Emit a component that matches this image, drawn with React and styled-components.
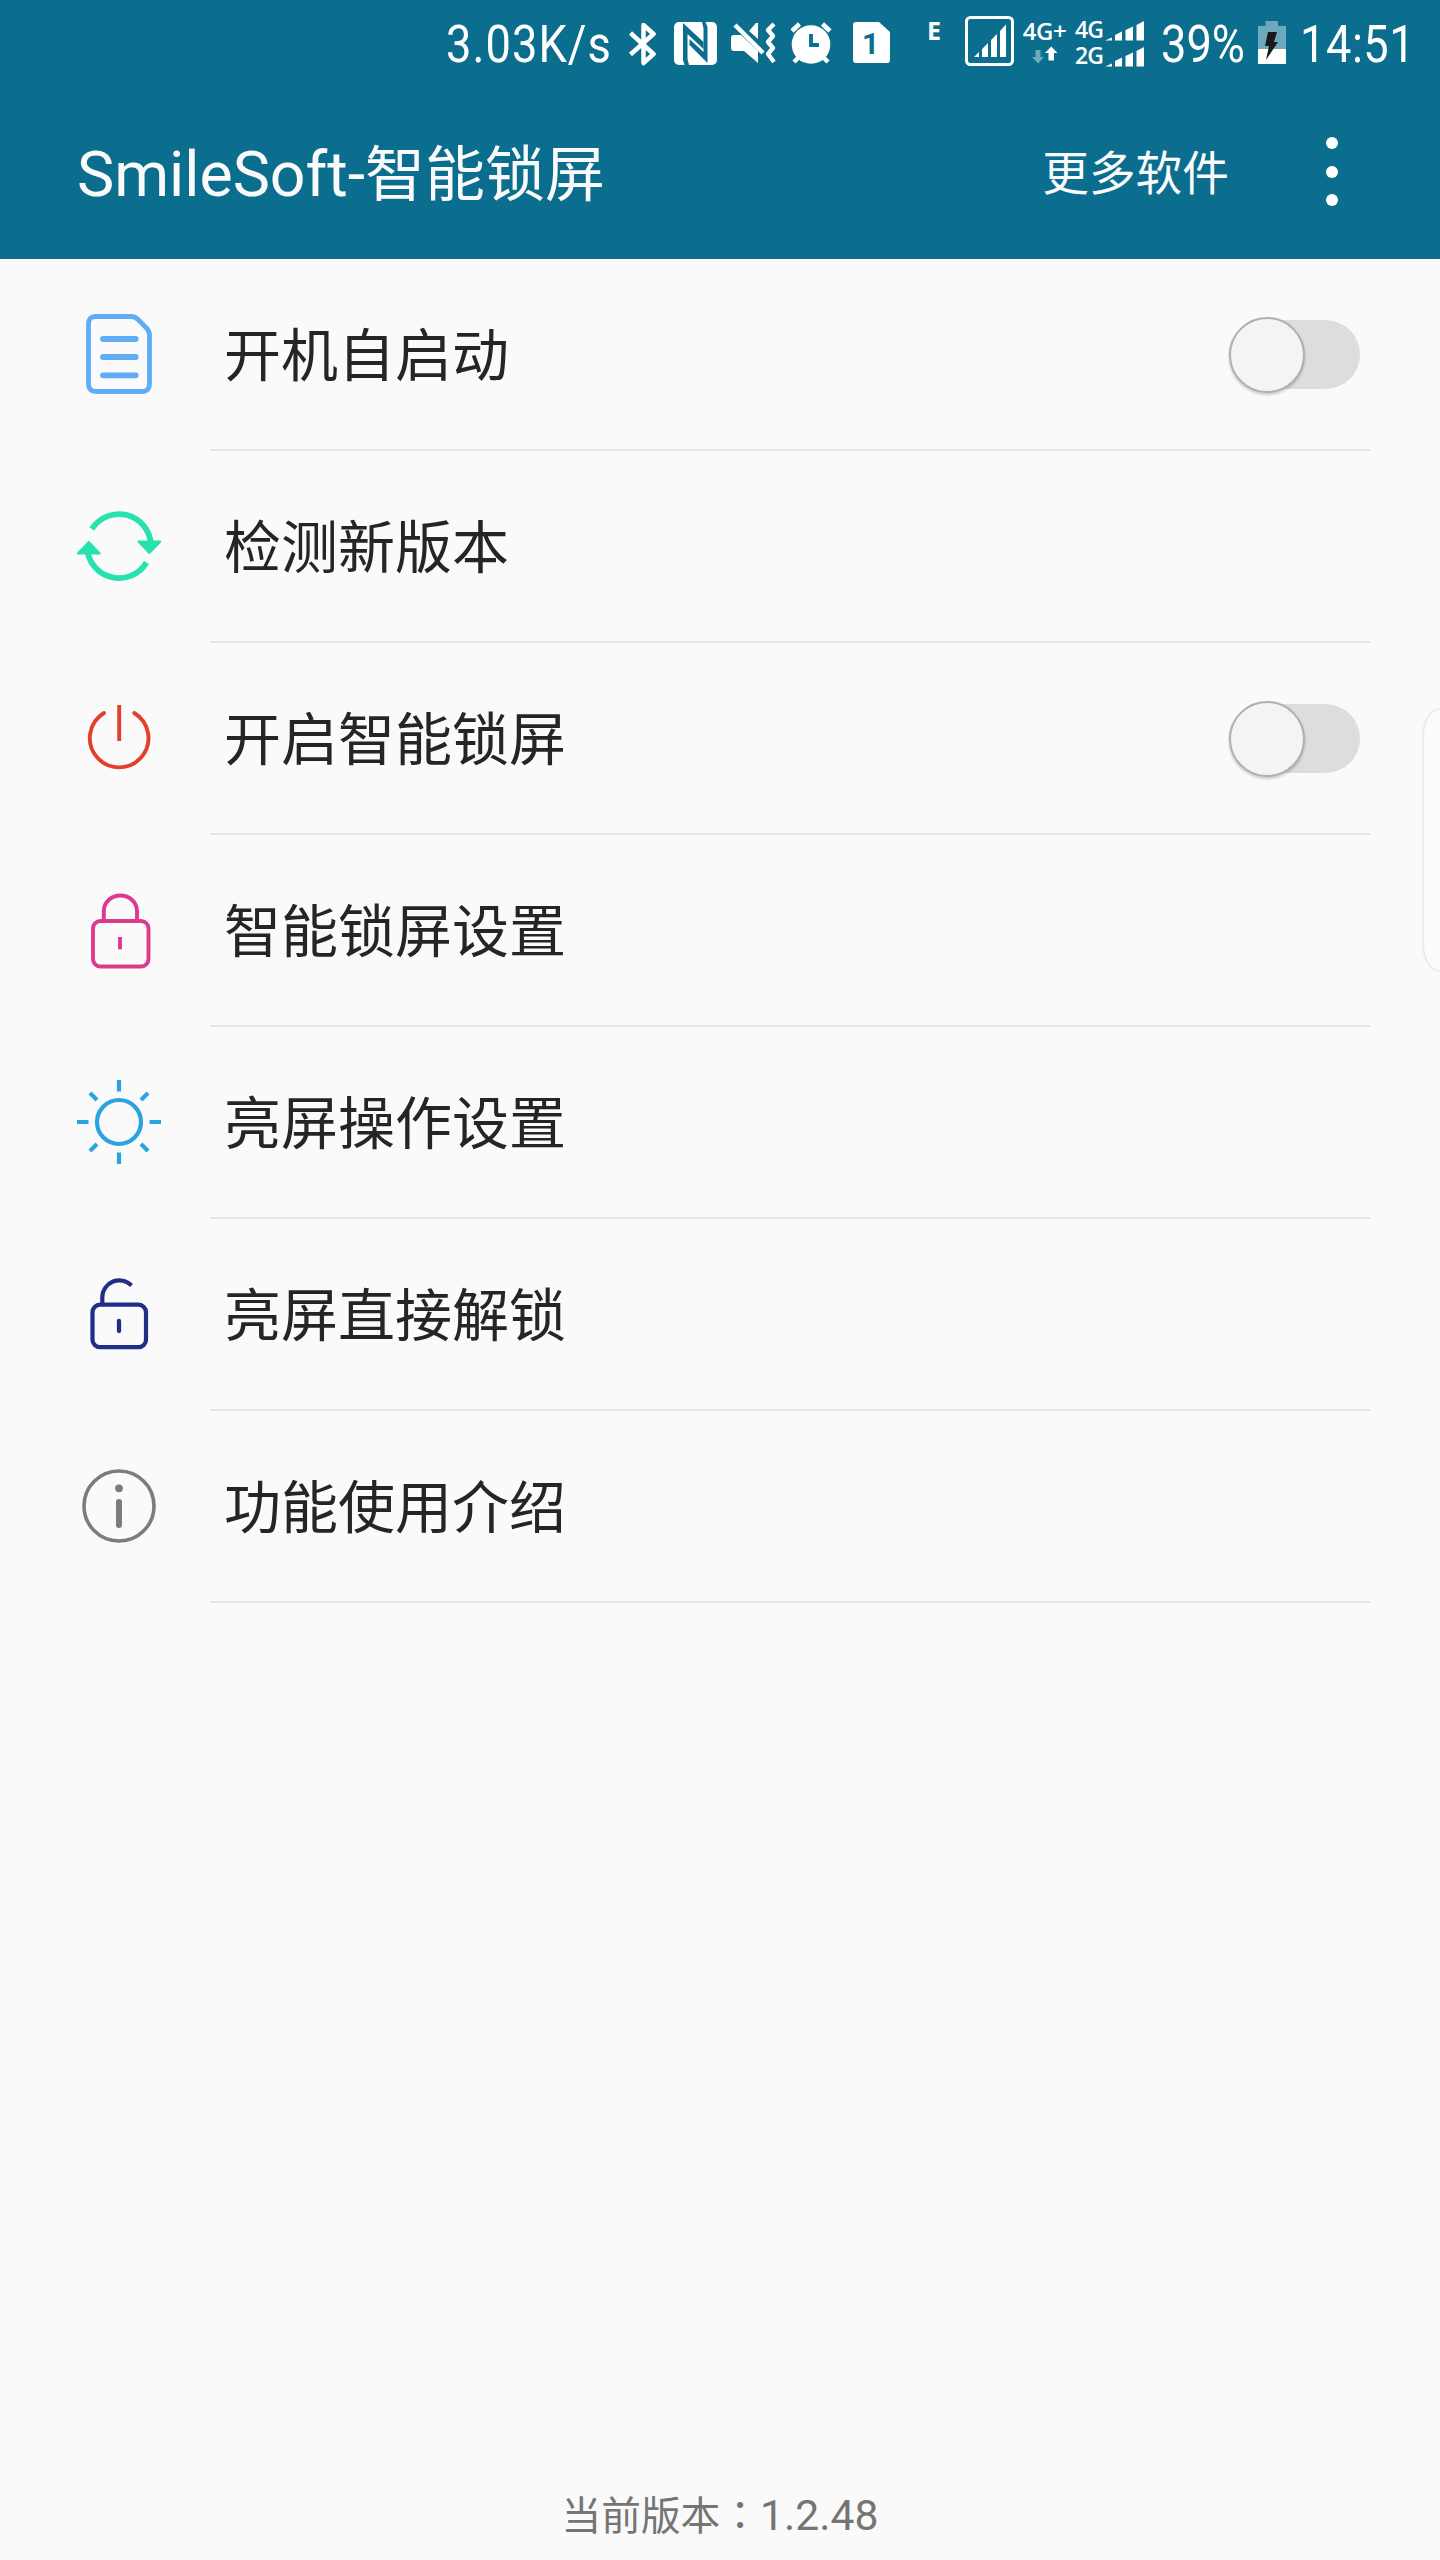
import React from "react";
import styled, { createGlobalStyle } from "styled-components";

const GlobalStyle = createGlobalStyle`
    * {
      box-sizing: border-box;
    }
    body {
      margin: 0;
      background: #fafafa;
      font-family: Roboto, "Noto Sans CJK SC", sans-serif;
    }
    svg {
      display: block;
    }
`;

const BluetoothIcon = () => (
    <svg width="28" height="44" viewBox="0 0 28 44" fill="none" stroke="#fff" strokeWidth="4.5" strokeLinejoin="round">
        <path d="M1.5 11L24.5 32L14.5 41V3L24.5 12L1.5 32.5" />
    </svg>
);

const NfcIcon = () => (
    <svg width="43" height="43" viewBox="0 0 43 43" fill="#0c6e8f">
        <rect width="43" height="43" rx="5" fill="#fff" />
        <path d="M9 1L29.500 20V27L13.500 12V37L15 43H10.500L9 38Z" />
        <path d="M33.500 41L15.500 23V17L29.500 30V6L28 0H31.500L33.500 5Z" />
    </svg>
);

const MuteIcon = () => (
    <svg width="46" height="44" viewBox="0 0 46 44" fill="none" stroke="#fff">
        <path d="M0 16Q0 13 3 13H10L27 29V41L13 29H3Q0 29 0 26Z" fill="#fff" stroke="none" />
        <path d="M18 9L25 1H27V17Z" fill="#fff" stroke="none" />
        <path d="M4 3L32 31" strokeWidth="4.5" />
        <path d="M43 2L37 8L42 14L37 20L42 26L37 32L43 40" strokeWidth="4.3" strokeLinejoin="round" />
    </svg>
);

const AlarmIcon = () => (
    <svg width="42" height="42" viewBox="0 0 42 42" fill="none" stroke="#fff" strokeWidth="4.5">
        <circle cx="21" cy="22.5" r="19.3" fill="#fff" stroke="none" />
        <path d="M2 9L9.5 2M32.500 2L40 9M9 35L4 40M33 35L38 40" />
        <path d="M21 12V23H29" stroke="#0c6e8f" strokeWidth="3.8" />
    </svg>
);

const SimIcon = () => (
    <svg width="37" height="41" viewBox="0 0 37 41" fill="#fff">
        <path d="M3 0H26L37 10V38Q37 41 34 41H3Q0 41 0 38V3Q0 0 3 0Z" />
    </svg>
);

const SignalBoxIcon = () => (
    <svg width="49" height="50" viewBox="0 0 49 50" fill="#fff">
        <rect x="1.500" y="1.500" width="46" height="47" rx="4" fill="none" stroke="#fff" strokeWidth="3" />
        <path d="M9 41L14 36V41ZM17 33L23 27V41H17ZM26 24L32 18V41H26ZM35 15L41 8.500V41H35Z" />
    </svg>
);

const DataArrowsIcon = () => (
    <svg width="26" height="18" viewBox="0 0 26 18" fill="#fff">
        <path d="M3.500 4H8.500V11H12L6 17.500L0 11H3.500Z" opacity=".4" />
        <path d="M16.500 14.500H22V7H25.500L19.300 .5L13 7H16.500Z" />
    </svg>
);

const BarsIcon = () => (
    <svg width="39" height="20" viewBox="0 0 39 20" fill="#fff">
        <path d="M0 19.500L7 16.500V19.500ZM10 14L17 10.500V19.500H10ZM20.500 9L28 5.500V19.500H20.500ZM31.500 4L39 0V19.500H31.500Z" />
    </svg>
);

const BatteryIcon = () => (
    <svg width="28" height="43" viewBox="0 0 28 43" fill="#fff">
        <path d="M0 5H7.500V0H20V5H28V28H0Z" opacity=".4" />
        <path d="M0 28H28V43H0Z" />
        <path d="M10 11H19L16 21H20L8 39L11 25H7Z" fill="#1a1a1a" />
    </svg>
);

const RowIcon = ({ color, width, children }) => (
    <svg width="84" height="84" viewBox="0 0 84 84" fill="none" stroke={color} strokeWidth={width}>
        {children}
    </svg>
);

const items = [
    {
        title: "开机自启动",
        toggle: true,
        icon: (
            <RowIcon color="#61adf5" width="4.8">
                <path d="M18.500 4.500H54Q58 4.500 61 7.500L69.500 16Q72.500 19 72.500 23V72Q72.500 79.500 65 79.500H19Q11.500 79.500 11.500 72V12Q11.500 4.500 18.500 4.500Z" />
                <path d="M26 27H58.700M26 45H58.700M26 63.300H58.700" strokeWidth="5.800" strokeLinecap="round" />
            </RowIcon>
        ),
    },
    {
        title: "检测新版本",
        icon: (
            <RowIcon color="#27e1ae" width="5.8">
                <path d="M14.900 25A32 32 0 0 1 73.900 40" />
                <path d="M10.100 44A32 32 0 0 0 69.500 58.500" />
                <path d="M61.500 37.500H83.500L72.300 49Z" fill="#27e1ae" strokeWidth="2" strokeLinejoin="round" />
                <path d="M.8 49.500H22.700L11.800 38Z" fill="#27e1ae" strokeWidth="2" strokeLinejoin="round" />
            </RowIcon>
        ),
    },
    {
        title: "开启智能锁屏",
        toggle: true,
        icon: (
            <RowIcon color="#e2402a" width="3.9">
                <path d="M27 17A29.300 29.300 0 1 0 57.300 17" strokeLinecap="round" />
                <path d="M42.200 9V45" />
            </RowIcon>
        ),
    },
    {
        title: "智能锁屏设置",
        icon: (
            <RowIcon color="#dc3a8b" width="3.9">
                <rect x="16" y="33" width="55.500" height="45.500" rx="7.500" />
                <path d="M26.800 33V23A16.600 15.500 0 0 1 60 23V33" />
                <path d="M43 49V61.300" />
            </RowIcon>
        ),
    },
    {
        title: "亮屏操作设置",
        icon: (
            <RowIcon color="#2aa3e2" width="4.2">
                <circle cx="42" cy="42" r="22" />
                <path d="M42 0V11.500M42 72.500V84M0 42H11.500M72.500 42H84M13 13L20 20M64 64L71 71M13 71L20 64M64 20L71 13" />
            </RowIcon>
        ),
    },
    {
        title: "亮屏直接解锁",
        icon: (
            <RowIcon color="#222d88" width="4.2">
                <rect x="15.500" y="32.700" width="53.500" height="42.500" rx="7.500" />
                <path d="M25.300 32V25A17 17 0 0 1 54.500 13.500" />
                <path d="M42 49V59" strokeLinecap="round" strokeWidth="4.300" />
            </RowIcon>
        ),
    },
    {
        title: "功能使用介绍",
        icon: (
            <RowIcon color="#7c7c7c" width="3.6">
                <circle cx="42" cy="42" r="35" />
                <path d="M42 38V61" strokeLinecap="round" strokeWidth="6" />
                <circle cx="42" cy="24.300" r="3.900" fill="#7c7c7c" stroke="none" />
            </RowIcon>
        ),
    },
];

export default class App extends React.Component {
    constructor(props) {
        super(props);
        this.state = { on: {} };

        this.toggle = this.toggle.bind(this);
    }

    toggle(title) {
        this.setState(({ on }) => ({ on: { ...on, [title]: !on[title] } }));
    }

    render() {
        return (
            <Screen>
                <GlobalStyle />
                <StatusBar>
                    <NarrowText $width={166} $spacing={1.2}>3.03K/s</NarrowText>
                    <StatusItem $gap={17}><BluetoothIcon /></StatusItem>
                    <StatusItem $gap={17}><NfcIcon /></StatusItem>
                    <StatusItem $gap={14}><MuteIcon /></StatusItem>
                    <StatusItem $gap={13}><AlarmIcon /></StatusItem>
                    <SimBadge>
                        <SimIcon />
                        <SimNumber>1</SimNumber>
                    </SimBadge>
                    <EdgeLabel>E</EdgeLabel>
                    <StatusItem $gap={24} $top={16}><SignalBoxIcon /></StatusItem>
                    <DataColumn>
                        <NetLabel>4G+</NetLabel>
                        <DataArrowsIcon />
                    </DataColumn>
                    <SimColumn>
                        <SimSignal>
                            <SmallNetLabel>4G</SmallNetLabel>
                            <BarsIcon />
                        </SimSignal>
                        <SimSignal>
                            <SmallNetLabel>2G</SmallNetLabel>
                            <BarsIcon />
                        </SimSignal>
                    </SimColumn>
                    <NarrowText $width={84} $gap={17} $spacing={0}>39%</NarrowText>
                    <StatusItem $gap={13} $top={21}><BatteryIcon /></StatusItem>
                    <NarrowText $width={115} $gap={14} $spacing={0.6}>14:51</NarrowText>
                </StatusBar>
                <Header>
                    <Title>
                        <Latin>SmileSoft-</Latin>智能锁屏
                    </Title>
                    <MoreApps>更多软件</MoreApps>
                    <MenuButton aria-label="menu">
                        <Dot />
                        <Dot />
                        <Dot />
                    </MenuButton>
                </Header>
                <List>
                    {items.map(({ title, icon, toggle }) => (
                        <Row key={title}>
                            <IconCell>{icon}</IconCell>
                            <RowBody>
                                <RowTitle>{title}</RowTitle>
                                {toggle && (
                                    <Switch
                                        role="switch"
                                        aria-checked={!!this.state.on[title]}
                                        $on={this.state.on[title]}
                                        onClick={() => this.toggle(title)}
                                    >
                                        <Knob />
                                    </Switch>
                                )}
                            </RowBody>
                        </Row>
                    ))}
                </List>
                <Footer>
                    当前版本<Colon>：</Colon>
                    <Version>1.2.48</Version>
                </Footer>
                <EdgeHandle />
            </Screen>
        );
    }
}

const Screen = styled.div`
    position: relative;
    display: flex;
    flex-direction: column;
    width: 1440px;
    height: 2560px;
    overflow: hidden;
    background: #fafafa;
`;

const StatusBar = styled.div`
    display: flex;
    justify-content: flex-end;
    align-items: flex-start;
    height: 89px;
    padding-right: 25px;
    background: #0c6e8f;
    color: #fff;
`;

const NarrowText = styled.span`
    width: ${({ $width }) => $width}px;
    margin-left: ${({ $gap }) => $gap || 0}px;
    padding-top: 15px;
    font-size: 52px;
    line-height: 60px;
    letter-spacing: ${({ $spacing }) => $spacing}px;
    white-space: nowrap;
    transform: scaleX(0.87);
    transform-origin: left;
`;

const StatusItem = styled.div`
    margin-left: ${({ $gap }) => $gap}px;
    padding-top: ${({ $top }) => $top || 22}px;
`;

const SimBadge = styled(StatusItem)`
    position: relative;
    margin-left: 21px;
`;

const SimNumber = styled.span`
    position: absolute;
    top: 25px;
    left: 0;
    width: 35px;
    color: #0c6e8f;
    font: bold 30px/37px Roboto, sans-serif;
    text-align: center;
`;

const EdgeLabel = styled.span`
    width: 14px;
    margin-left: 37px;
    padding-top: 15px;
    font: bold 25px/30px "Open Sans", sans-serif;
`;

const DataColumn = styled.div`
    display: flex;
    flex-direction: column;
    align-items: center;
    width: 43px;
    margin-left: 9px;
    padding-top: 16px;
`;

const NetLabel = styled.span`
    font: 600 24px/30px "Open Sans", sans-serif;
    letter-spacing: -0.5px;
`;

const SimColumn = styled.div`
    margin-left: 9px;
    padding-top: 16px;
`;

const SimSignal = styled.div`
    display: flex;
    align-items: center;
    height: 26px;
    gap: 1px;

    svg {
      margin-top: 4px;
    }
`;

const SmallNetLabel = styled(NetLabel)`
    width: 29px;
    font-size: 23px;
    line-height: 24px;
    letter-spacing: -1px;
`;

const Header = styled.header`
    display: flex;
    align-items: center;
    height: 170px;
    padding: 0 102px 5px 77px;
    background: #0c6e8f;
    color: #fafafa;
`;

const Title = styled.h1`
    flex: 1;
    margin: 0;
    padding-top: 2px;
    font: 400 60px/80px "Noto Sans CJK SC", sans-serif;
`;

const Latin = styled.span`
    font-family: Roboto, sans-serif;
    font-size: 62.6px;
`;

const MoreApps = styled.span`
    padding-bottom: 3px;
    font: 400 46.7px/64px "Noto Sans CJK SC", sans-serif;
`;

const MenuButton = styled.button`
    display: flex;
    flex-direction: column;
    gap: 16.5px;
    margin: 0 0 0 97px;
    padding: 0;
    border: none;
    background: transparent;
    cursor: pointer;
`;

const Dot = styled.span`
    width: 12px;
    height: 12px;
    border-radius: 50%;
    background: #fff;
`;

const List = styled.div`
    flex: 1;
`;

const Row = styled.div`
    display: flex;
    height: 192px;
    padding: 0 70px 0 77px;
`;

const IconCell = styled.div`
    width: 133px;
    padding-top: 53px;
`;

const RowBody = styled.div`
    flex: 1;
    display: flex;
    align-items: center;
    justify-content: space-between;
    padding: 0 10px 0 14px;
    border-bottom: 2px solid #e6e6e6;
`;

const RowTitle = styled.span`
    padding-bottom: 6px;
    color: #252525;
    font: 400 57px/80px "Noto Sans CJK SC", sans-serif;
`;

const Switch = styled.button`
    display: flex;
    align-items: center;
    justify-content: ${({ $on }) => ($on ? "flex-end" : "flex-start")};
    width: 127px;
    height: 69px;
    margin: 1px 0 0;
    padding: 0;
    border: none;
    border-radius: 35px;
    background: ${({ $on }) => ($on ? "#8fc3d3" : "#dddddd")};
    cursor: pointer;
`;

const Knob = styled.span`
    flex: none;
    width: 76px;
    height: 76px;
    margin-left: -4px;
    border: 2px solid #b0b0b0;
    border-radius: 50%;
    background: #f4f4f4;
    box-shadow: 0 2px 3px rgba(0, 0, 0, 0.2);
`;

const Footer = styled.footer`
    display: flex;
    justify-content: center;
    align-items: baseline;
    height: 77px;
    color: #757575;
    font: 400 39.7px/60px "Noto Sans CJK SC", sans-serif;
`;

const Colon = styled.span`
    font-family: "Noto Sans CJK TC", sans-serif;
`;

const Version = styled.span`
    font-family: Roboto, sans-serif;
    font-size: 42.7px;
`;

const EdgeHandle = styled.div`
    position: absolute;
    top: 708px;
    right: -20px;
    width: 38px;
    height: 264px;
    border: 2px solid #ececec;
    border-radius: 18px / 28px;
    background: #fbfbfb;
`;
